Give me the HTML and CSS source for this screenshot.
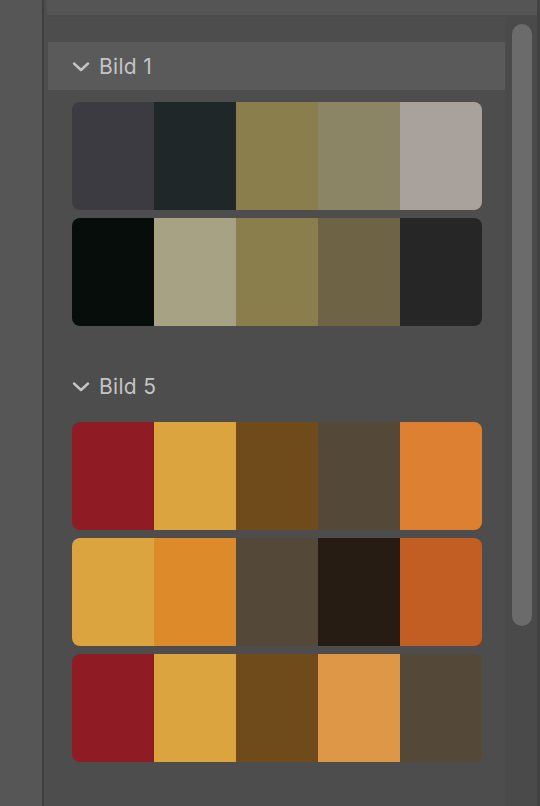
FILE: index.html
```html
<!DOCTYPE html>
<html>
<head>
<meta charset="utf-8">
<link rel="stylesheet" href="styles.css">
</head>
<body>
<div class="app">
  <div class="side"></div>
  <div class="divider"></div>
  <div class="gutter"></div>
  <div class="panel">
    <div class="topbar"></div>
    <div class="content">
      <div class="list">
        <section class="group">
          <div class="group-head hover">
            <svg class="chev" width="18" height="10" viewBox="0 0 18 10"><path d="M2 1.5 L9 8 L16 1.5" fill="none" stroke="#c4c4c4" stroke-width="2.4" stroke-linecap="round" stroke-linejoin="round"/></svg>
            <span class="title">Bild 1</span>
          </div>
          <div class="palettes">
            <div class="palette">
              <div class="sw c1a"></div><div class="sw c1b"></div><div class="sw c1c"></div><div class="sw c1d"></div><div class="sw c1e"></div>
            </div>
            <div class="palette">
              <div class="sw c2a"></div><div class="sw c2b"></div><div class="sw c2c"></div><div class="sw c2d"></div><div class="sw c2e"></div>
            </div>
          </div>
        </section>
        <section class="group">
          <div class="group-head">
            <svg class="chev" width="18" height="10" viewBox="0 0 18 10"><path d="M2 1.5 L9 8 L16 1.5" fill="none" stroke="#c4c4c4" stroke-width="2.4" stroke-linecap="round" stroke-linejoin="round"/></svg>
            <span class="title">Bild 5</span>
          </div>
          <div class="palettes">
            <div class="palette">
              <div class="sw c3a"></div><div class="sw c3b"></div><div class="sw c3c"></div><div class="sw c3d"></div><div class="sw c3e"></div>
            </div>
            <div class="palette">
              <div class="sw c4a"></div><div class="sw c4b"></div><div class="sw c4c"></div><div class="sw c4d"></div><div class="sw c4e"></div>
            </div>
            <div class="palette">
              <div class="sw c5a"></div><div class="sw c5b"></div><div class="sw c5c"></div><div class="sw c5d"></div><div class="sw c5e"></div>
            </div>
          </div>
        </section>
      </div>
      <div class="scrolltrack"><div class="thumb"></div></div>
    </div>
  </div>
  <div class="edge"></div>
</div>
</body>
</html>
```
FILE: styles.css
```css
* { box-sizing: border-box; }
html, body { margin: 0; padding: 0; }
body {
  width: 540px;
  height: 806px;
  overflow: hidden;
  background: #4d4d4d;
  font-family: Inter, "Noto Sans", sans-serif;
}
.app {
  display: flex;
  height: 806px;
}
.side {
  width: 42px;
  background: #565656;
}
.divider {
  width: 2px;
  background: #3f3f3f;
}
.gutter {
  width: 3px;
  background: #4e4e4e;
}
.panel {
  flex: 1;
  display: flex;
  flex-direction: column;
  background: #4d4d4d;
}
.topbar {
  height: 17px;
  background: #555555;
  border-bottom: 2px solid #4a4a4a;
}
.content {
  flex: 1;
  position: relative;
}
.list {
  padding-top: 25px;
  padding-right: 32px;
  display: flex;
  flex-direction: column;
  gap: 36px;
}
.group-head {
  height: 48px;
  display: flex;
  align-items: center;
  padding-left: 24px;
  margin-left: 1px;
}
.group-head.hover {
  background: #5a5a5a;
}
.chev {
  display: block;
  margin-top: 1px;
}
.title {
  margin-left: 9px;
  font-size: 21px;
  color: #c4c4c4;
  letter-spacing: 0.3px;
}
.palettes {
  display: flex;
  flex-direction: column;
  gap: 8px;
  padding: 12px 0 0 25px;
}
.palette {
  display: flex;
  width: 410px;
  height: 108px;
  border-radius: 8px;
  overflow: hidden;
}
.sw { flex: 1; }
.c1a { background: #3c3b41; }
.c1b { background: #1f2728; }
.c1c { background: #8a7e4d; }
.c1d { background: #8b8566; }
.c1e { background: #a8a19c; }
.c2a { background: #070d0b; }
.c2b { background: #a7a283; }
.c2c { background: #8a7e4d; }
.c2d { background: #6f6346; }
.c2e { background: #262626; }
.c3a { background: #8f1c24; }
.c3b { background: #dba43f; }
.c3c { background: #6f4a1b; }
.c3d { background: #544838; }
.c3e { background: #dd8032; }
.c4a { background: #dba43f; }
.c4b { background: #dc8a2a; }
.c4c { background: #544838; }
.c4d { background: #261c14; }
.c4e { background: #c25e24; }
.c5a { background: #8f1c24; }
.c5b { background: #dba43f; }
.c5c { background: #6f4a1b; }
.c5d { background: #de9747; }
.c5e { background: #544838; }
.scrolltrack {
  position: absolute;
  top: 0;
  right: 0;
  width: 31px;
  height: 100%;
  background: #4a4a4a;
}
.thumb {
  position: absolute;
  top: 7px;
  left: 6px;
  width: 20px;
  height: 602px;
  border-radius: 10px;
  background: #6b6b6b;
}
.edge {
  width: 3px;
  background: #424242;
}
```
